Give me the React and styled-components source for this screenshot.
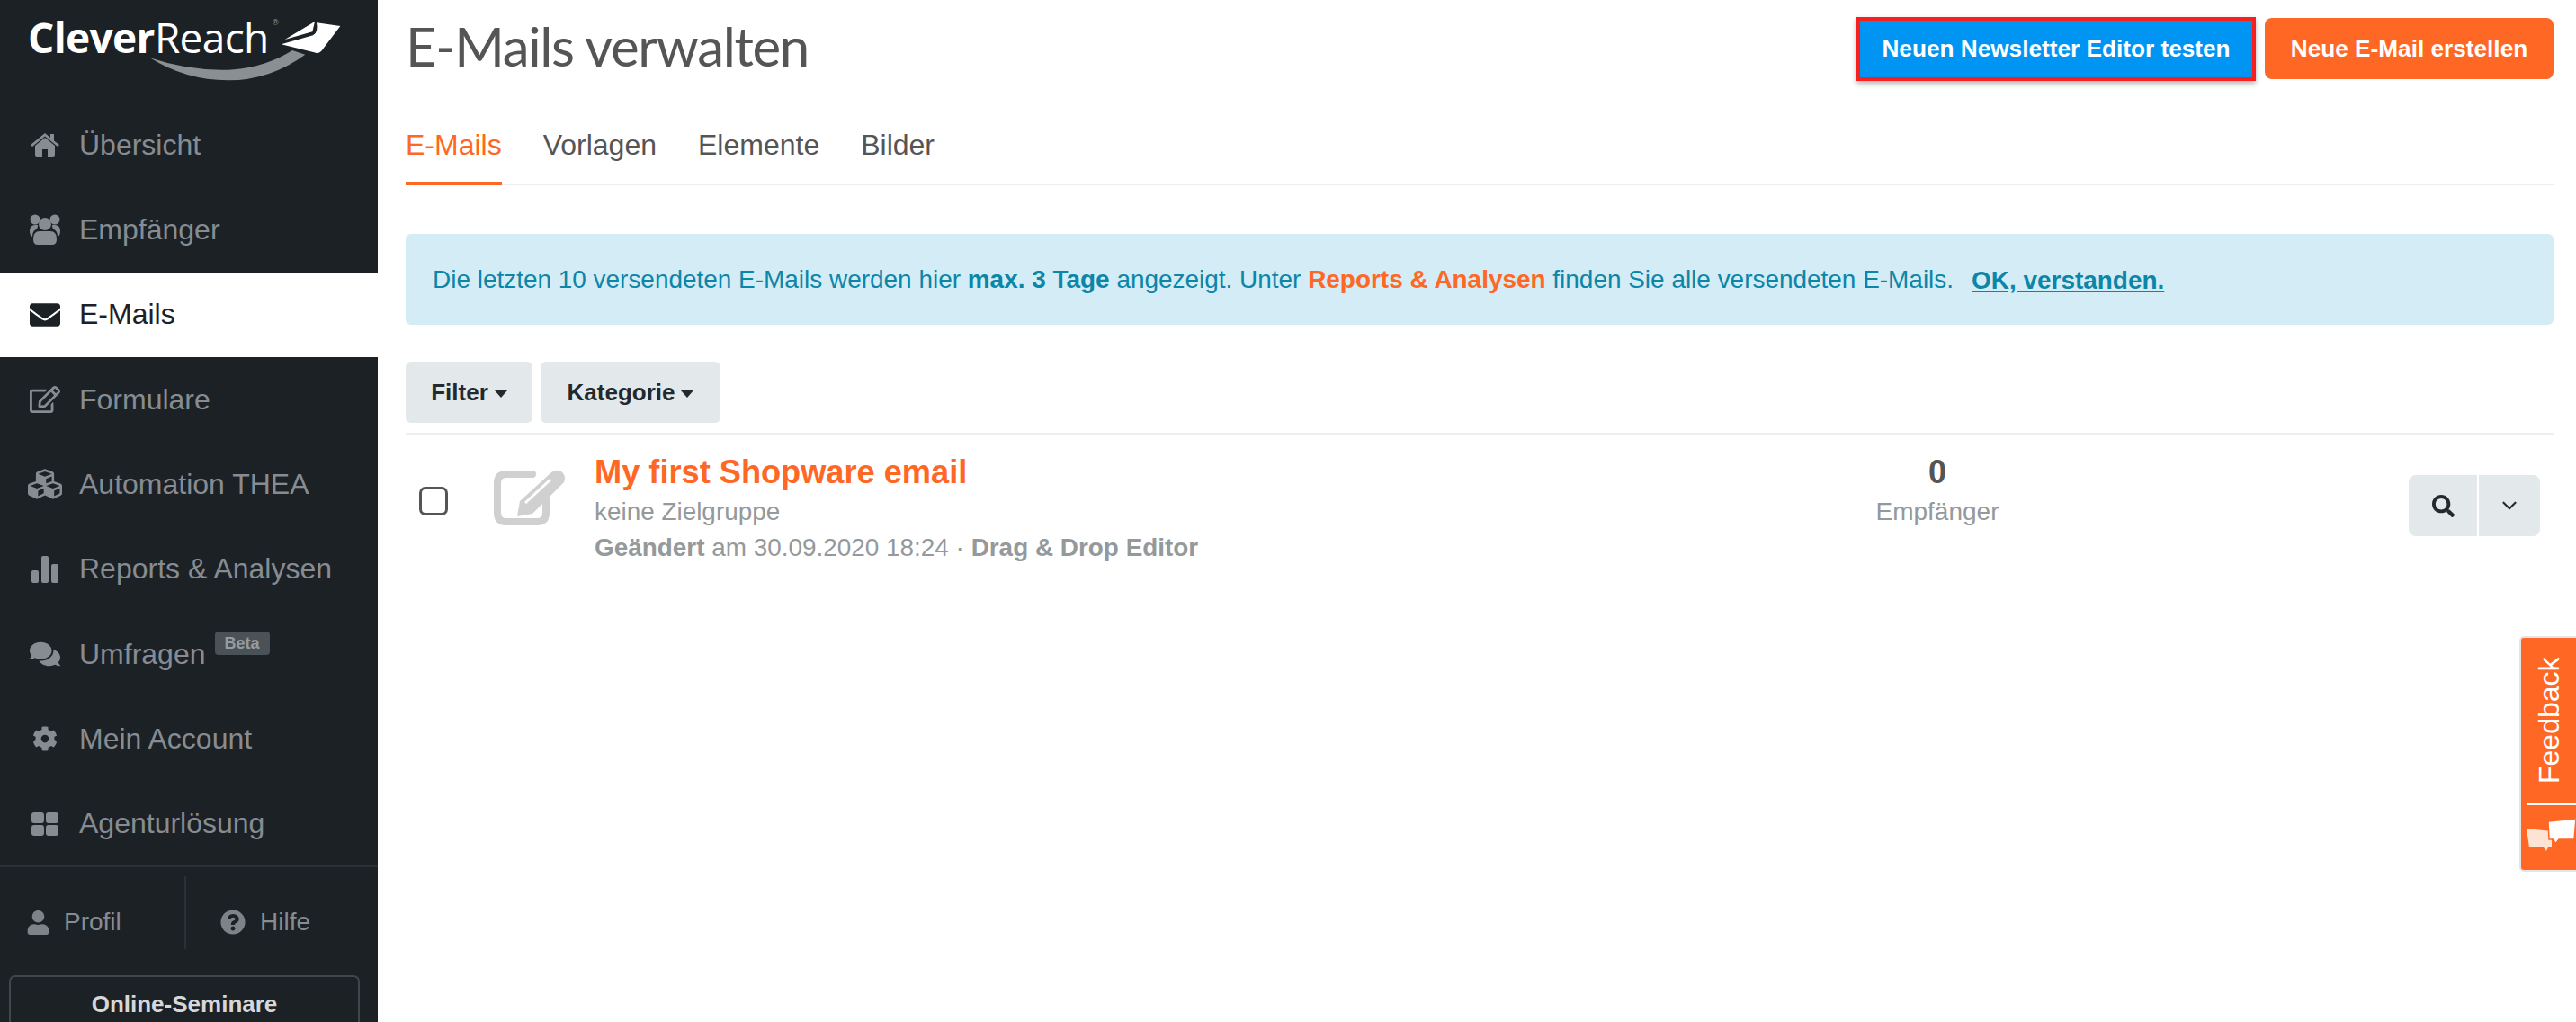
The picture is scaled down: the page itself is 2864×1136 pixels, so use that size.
import React from "react";
import styled, { createGlobalStyle } from "styled-components";
import { FaEnvelope, FaRegEdit, FaCubes, FaComments, FaCog, FaUser, FaQuestionCircle, FaSearch } from "react-icons/fa";
import { FiChevronDown } from "react-icons/fi";

const GlobalStyle = createGlobalStyle`
  html, body {
    margin: 0;
    padding: 0;
    background: #fff;
    font-family: "Liberation Sans", Arial, sans-serif;
  }
  * { box-sizing: border-box; }
`;

const Page = styled.div`
  position: relative;
  display: flex;
  width: 2864px;
  height: 1136px;
  overflow: hidden;
`;

const Sidebar = styled.aside`
  width: 420px;
  flex-shrink: 0;
  background: #1c2126;
  display: flex;
  flex-direction: column;
  & > * { flex-shrink: 0; }
`;

const LogoWrap = styled.div`
  position: relative;
  height: 114px;
  padding: 11px 0 0 31px;
`;

const LogoText = styled.div`
  font-family: "Open Sans", sans-serif;
  font-size: 46px;
  line-height: 60px;
  letter-spacing: -0.65px;
  color: #fff;
  font-weight: 400;
  b { font-weight: 700; }
`;

const LogoArt = styled.svg`
  position: absolute;
  left: 0;
  top: 0;
  width: 420px;
  height: 110px;
`;

const Registered = styled.span`
  position: absolute;
  left: 303px;
  top: 20px;
  font-size: 9px;
  color: #9aa0a4;
`;

const NavItem = styled.div`
  height: 94.33px;
  display: flex;
  align-items: center;
  padding-left: 28px;
  font-size: 32px;
  color: ${({ $active }) => ($active ? "#1c2126" : "#868c91")};
  background: ${({ $active }) => ($active ? "#fff" : "transparent")};
`;

const NavIcon = styled.span`
  width: 44px;
  margin-right: 16px;
  display: flex;
  justify-content: center;
  font-size: ${({ $size }) => $size || 34}px;
`;

const BetaBadge = styled.span`
  align-self: flex-start;
  margin: 22px 0 0 10px;
  padding: 0 11px;
  height: 26px;
  line-height: 26px;
  border-radius: 4px;
  background: #4a5157;
  color: #969ca0;
  font-size: 18px;
  font-weight: 700;
`;

const BottomRow = styled.div`
  border-top: 2px solid #2a3035;
  margin-top: -1px;
  height: 122px;
  display: flex;
  padding-top: 10px;
  color: #868c91;
  font-size: 28px;
`;

const BottomLink = styled.div`
  width: ${({ $width }) => $width}px;
  height: 81px;
  padding: 22px 0 0 ${({ $inset }) => $inset}px;
  display: flex;
  align-items: center;
  gap: ${({ $gap }) => $gap}px;
  svg { font-size: ${({ $iconSize }) => $iconSize}px; color: #7d8489; }
`;

const BottomSep = styled.div`
  width: 2px;
  height: 81px;
  background: #2a3035;
`;

const SeminarBox = styled.div`
  margin: 0 20px 0 10px;
  height: 80px;
  padding-top: 15px;
  border: 2px solid #40464b;
  border-radius: 7px;
  text-align: center;
  color: #d5d8da;
  font-size: 26px;
  line-height: 30px;
  font-weight: 700;
`;

const Main = styled.main`
  flex: 1;
  padding: 0 25px 0 31px;
`;

const Header = styled.header`
  height: 110px;
  padding-top: 19px;
  display: flex;
  justify-content: space-between;
  align-items: flex-start;
`;

const Title = styled.h1`
  margin: -3px 0 0;
  font-family: "Lato", sans-serif;
  font-weight: 400;
  font-size: 60px;
  line-height: 70px;
  color: #555;
  letter-spacing: -1.35px;
`;

const HeaderActions = styled.div`
  display: flex;
  align-items: flex-start;
  gap: 10px;
`;

const ActionButton = styled.button`
  font-family: inherit;
  font-weight: 700;
  font-size: 26.2px;
  color: #fff;
  border-radius: ${({ $blue }) => ($blue ? 0 : 8)}px;
  width: ${({ $blue }) => ($blue ? 444 : 321)}px;
  height: ${({ $blue }) => ($blue ? 71 : 68)}px;
  margin-top: ${({ $blue }) => ($blue ? 0 : 1)}px;
  padding: 0;
  background: ${({ $blue }) => ($blue ? "#0094f3" : "#ff6725")};
  border: ${({ $blue }) => ($blue ? "4px solid #f8201f" : "none")};
  box-shadow: ${({ $blue }) => ($blue ? "0 3px 6px rgba(0,0,0,.3)" : "none")};
`;

const Tabs = styled.nav`
  height: 96px;
  display: flex;
  gap: 46px;
  border-bottom: 2px solid #eee;
`;

const Tab = styled.div`
  height: 96px;
  padding-top: 32px;
  font-size: 32px;
  line-height: 38px;
  color: ${({ $active }) => ($active ? "#ff6725" : "#555")};
  border-bottom: 4px solid ${({ $active }) => ($active ? "#ff6725" : "transparent")};
  margin-bottom: -2px;
`;

const Alert = styled.div`
  margin-top: 54px;
  height: 101px;
  display: flex;
  align-items: center;
  padding-left: 30px;
  border-radius: 6px;
  background: #d4ecf6;
  color: #0c86a8;
  font-size: 27.95px;
  b { font-weight: 700; }
`;

const OrangeStrong = styled.b`
  color: #ff6725;
`;

const AlertLink = styled.a`
  margin: 2px 0 0 20px;
  font-weight: 700;
  text-decoration: underline;
  color: #0c86a8;
`;

const Toolbar = styled.div`
  margin-top: 41px;
  padding-bottom: 11px;
  border-bottom: 2px solid #eee;
  display: flex;
  gap: 9px;
`;

const FilterButton = styled.div`
  width: ${({ $width }) => $width}px;
  height: 68px;
  display: flex;
  align-items: center;
  justify-content: center;
  gap: 7px;
  border-radius: 6px;
  background: #e3e8ea;
  color: #24292d;
  font-size: 26px;
  font-weight: 700;
`;

const Caret = styled.span`
  margin-top: 3px;
  border-left: 7.5px solid transparent;
  border-right: 7.5px solid transparent;
  border-top: 8px solid #24292d;
`;

const Row = styled.div`
  display: flex;
  align-items: flex-start;
  padding: 22px 15px 0;
`;

const Checkbox = styled.span`
  width: 32px;
  height: 32px;
  margin-top: 36px;
  margin-right: 50px;
  border: 3px solid #555;
  border-radius: 7px;
  flex-shrink: 0;
`;

const DraftIcon = styled.svg`
  width: 80px;
  height: 64px;
  margin-top: 16px;
  margin-right: 33px;
  flex-shrink: 0;
`;

const Info = styled.div`
  flex: 1;
  color: #94999b;
  font-size: 27.9px;
  line-height: 40px;
`;

const MailTitle = styled.div`
  color: #ff6725;
  font-size: 36.2px;
  font-weight: 700;
  margin-bottom: 4px;
`;

const Stats = styled.div`
  width: 300px;
  margin-right: 374px;
  text-align: center;
  color: #94999b;
  font-size: 28px;
  line-height: 40px;
`;

const StatNumber = styled.div`
  color: #555;
  font-size: 36px;
  font-weight: 700;
  margin-bottom: 4px;
`;

const ActionGroup = styled.div`
  display: flex;
  gap: 2px;
  margin-top: 23px;
  flex-shrink: 0;
`;

const GroupButton = styled.div`
  width: ${({ $width }) => $width}px;
  height: 68px;
  display: flex;
  align-items: center;
  justify-content: center;
  background: #e3e8ea;
  color: #24292d;
  border-radius: ${({ $side }) => ($side === "left" ? "8px 0 0 8px" : "0 8px 8px 0")};
`;

const FeedbackTab = styled.div`
  position: absolute;
  right: 0;
  top: 709px;
  width: 61px;
  height: 258px;
  background: #ff6725;
  border-radius: 3px 0 0 3px;
  box-shadow: 0 0 0 2px #e4e4e4;
  color: #fff;
`;

const FeedbackLabel = styled.div`
  height: 184px;
  display: flex;
  align-items: center;
  justify-content: center;
  padding-right: 13px;
  font-size: 32px;
  writing-mode: vertical-rl;
  transform: rotate(180deg);
`;

const FeedbackLine = styled.div`
  height: 2px;
  margin-left: 6px;
  background: #fff;
`;

const FeedbackArt = styled.svg`
  display: block;
  margin-top: 14px;
  width: 61px;
  height: 40px;
`;

function HomeIcon() {
  return (
    <svg width="32" height="26" viewBox="0 0 32 26" fill="currentColor">
      <path d="M5 14 L16 5 L27 14 V24 Q27 26 25 26 H19 V18 H13 V26 H7 Q5 26 5 24 Z" />
      <path d="M0 13 L16 0 L22 5 V1 H26 V8.5 L32 13 L30 15 L16 3.5 L2 15 Z" />
    </svg>
  );
}

function UsersIcon() {
  return (
    <svg width="34" height="36" viewBox="0 0 34 36" fill="currentColor">
      <circle cx="6" cy="7" r="5.5" />
      <circle cx="28" cy="7" r="5.5" />
      <circle cx="17" cy="12" r="7" />
      <path d="M4 29 Q4 20 11 20 H23 Q30 20 30 29 Q30 35 25 35 H9 Q4 35 4 29 Z" />
      <path d="M0 20 Q0 13 6 13 L9 13 Q9 17 7 18 Q3 20 3 26 Q0 25 0 20 Z" />
      <path d="M34 20 Q34 13 28 13 L25 13 Q25 17 27 18 Q31 20 31 26 Q34 25 34 20 Z" />
    </svg>
  );
}

function BarsIcon() {
  return (
    <svg width="32" height="30" viewBox="0 0 32 30" fill="currentColor">
      <rect x="1" y="16" width="8" height="14" rx="2" />
      <rect x="12" y="0" width="8" height="30" rx="2" />
      <rect x="23" y="9" width="8" height="21" rx="2" />
    </svg>
  );
}

function TilesIcon() {
  return (
    <svg width="30" height="26" viewBox="0 0 30 26" fill="currentColor">
      <rect x="0" y="0" width="14" height="12" rx="3" />
      <rect x="16" y="0" width="14" height="12" rx="3" />
      <rect x="0" y="14" width="14" height="12" rx="3" />
      <rect x="16" y="14" width="14" height="12" rx="3" />
    </svg>
  );
}

const navItems = [
  { label: "Übersicht", icon: <HomeIcon /> },
  { label: "Empfänger", icon: <UsersIcon /> },
  { label: "E-Mails", icon: <FaEnvelope />, active: true },
  { label: "Formulare", icon: <FaRegEdit /> },
  { label: "Automation THEA", icon: <FaCubes />, size: 38 },
  { label: "Reports & Analysen", icon: <BarsIcon /> },
  { label: "Umfragen", icon: <FaComments />, beta: true },
  { label: "Mein Account", icon: <FaCog />, size: 28 },
  { label: "Agenturlösung", icon: <TilesIcon /> },
];

const App = () => (
  <Page>
    <GlobalStyle />
    <Sidebar>
      <LogoWrap>
        <LogoText>
          <b>Clever</b>Reach
        </LogoText>
        <Registered>®</Registered>
        <LogoArt viewBox="0 0 1260 330">
          <path d="M1050 72 L950 132 L1042 106 Z" fill="#fff" />
          <path d="M1056 76 L1135 87 L1072 170 Q1062 180 1048 175 L938 148 L1044 118 Q1062 110 1056 76 Z" fill="#fff" />
          <path d="M500 193 Q640 240 780 232 Q890 222 975 168 L1018 182 Q900 268 760 268 Q620 268 500 193 Z" fill="#8a8f92" />
        </LogoArt>
      </LogoWrap>
      {navItems.map((item) => (
        <NavItem key={item.label} $active={item.active}>
          <NavIcon $size={item.size}>{item.icon}</NavIcon>
          {item.label}
          {item.beta && <BetaBadge>Beta</BetaBadge>}
        </NavItem>
      ))}
      <BottomRow>
        <BottomLink $width={205} $inset={29} $iconSize={27} $gap={15}>
          <FaUser />
          Profil
        </BottomLink>
        <BottomSep />
        <BottomLink $width={213} $inset={38} $iconSize={28} $gap={16}>
          <FaQuestionCircle />
          Hilfe
        </BottomLink>
      </BottomRow>
      <SeminarBox>Online-Seminare</SeminarBox>
    </Sidebar>

    <Main>
      <Header>
        <Title>E-Mails verwalten</Title>
        <HeaderActions>
          <ActionButton $blue>Neuen Newsletter Editor testen</ActionButton>
          <ActionButton>Neue E-Mail erstellen</ActionButton>
        </HeaderActions>
      </Header>

      <Tabs>
        <Tab $active>E-Mails</Tab>
        <Tab>Vorlagen</Tab>
        <Tab>Elemente</Tab>
        <Tab>Bilder</Tab>
      </Tabs>

      <Alert>
        <span>
          Die letzten 10 versendeten E-Mails werden hier <b>max. 3 Tage</b> angezeigt. Unter{" "}
          <OrangeStrong>Reports &amp; Analysen</OrangeStrong> finden Sie alle versendeten E-Mails.
        </span>
        <AlertLink>OK, verstanden.</AlertLink>
      </Alert>

      <Toolbar>
        <FilterButton $width={141}>
          Filter <Caret />
        </FilterButton>
        <FilterButton $width={200}>
          Kategorie <Caret />
        </FilterButton>
      </Toolbar>

      <Row>
        <Checkbox />
        <DraftIcon viewBox="0 0 80 64">
          <path d="M44 6 H15 Q5 6 5 16 V49 Q5 59 15 59 H49 Q59 59 59 49 V34" fill="none" stroke="#d0d0d0" strokeWidth="8" strokeLinecap="round" />
          <path d="M27 53 L30 36 L65 4 Q70 0 76 3 Q82 8 79 15 L44 50 Z" fill="#d0d0d0" />
          <path d="M36 38 L64 12" stroke="#fff" strokeWidth="3" />
        </DraftIcon>
        <Info>
          <MailTitle>My first Shopware email</MailTitle>
          <div>keine Zielgruppe</div>
          <div>
            <b>Geändert</b> am 30.09.2020 18:24 · <b>Drag &amp; Drop Editor</b>
          </div>
        </Info>
        <Stats>
          <StatNumber>0</StatNumber>
          <div>Empfänger</div>
        </Stats>
        <ActionGroup>
          <GroupButton $width={76} $side="left">
            <FaSearch size={25} />
          </GroupButton>
          <GroupButton $width={68} $side="right">
            <FiChevronDown size={26} />
          </GroupButton>
        </ActionGroup>
      </Row>
    </Main>

    <FeedbackTab>
      <FeedbackLabel>Feedback</FeedbackLabel>
      <FeedbackLine />
      <FeedbackArt viewBox="0 0 61 40">
        <path d="M6 12 L34 15 L34 33 L30 33 L28 37 L25 33 L9 33 Z" fill="#fde3d3" />
        <path d="M30 4 L61 1 L59 24 L42 24 L38 29 L36 24 L31 24 Z" fill="#fff" stroke="#ff6725" strokeWidth="1.5" />
      </FeedbackArt>
    </FeedbackTab>
  </Page>
);

export default App;
